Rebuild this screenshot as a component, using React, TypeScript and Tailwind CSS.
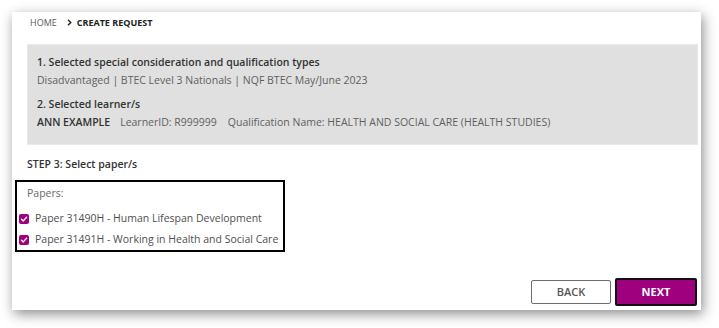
import React from "react";

function Check() {
  return (
    <span className="flex h-[10px] w-[10px] shrink-0 items-center justify-center rounded-[2px] bg-[#9e007e]">
      <svg width="8" height="8" viewBox="0 0 8 8" fill="none">
        <path d="M1.5 4.2 L3.3 5.9 L6.6 2.3" stroke="#fff" strokeWidth="1.4" strokeLinecap="round" strokeLinejoin="round" />
      </svg>
    </span>
  );
}

export default function App() {
  return (
    <div className="h-[328px] w-[719px] bg-white pl-3 pt-3 font-['Open_Sans',sans-serif] text-[10.5px]">
      <div className="flex h-[298px] w-[689px] flex-col bg-white shadow-[2px_4px_12px_rgba(0,0,0,0.45)]">
        <div className="flex h-[32px] items-start gap-[10px] pl-[18px] pt-[4px] text-[9px] leading-[13px]">
          <span className="text-[#5a5a5a]">HOME</span>
          <span className="flex items-center gap-[5px] font-bold text-[#222]">
            <svg width="5" height="7" viewBox="0 0 5 7" fill="none">
              <path d="M1 0.8 L3.8 3.5 L1 6.2" stroke="#222" strokeWidth="1.4" />
            </svg>
            CREATE REQUEST
          </span>
        </div>
        <div className="ml-[15px] mr-[3px] h-[101px] whitespace-nowrap border border-[#e8e9e8] bg-[#dfe0df] pl-[9px] pt-[8px] leading-[18px]">
          <div className="font-semibold text-[#333]">1. Selected special consideration and qualification types</div>
          <div className="text-[#5f5f5f]">Disadvantaged | BTEC Level 3 Nationals | NQF BTEC May/June 2023</div>
          <div className="mt-[6px] font-semibold text-[#333]">2. Selected learner/s</div>
          <div className="flex text-[#5f5f5f]">
            <span className="font-semibold text-[#333]">ANN EXAMPLE</span>
            <span className="ml-[10px]">LearnerID: R999999</span>
            <span className="ml-[11px]">Qualification Name: HEALTH AND SOCIAL CARE (HEALTH STUDIES)</span>
          </div>
        </div>
        <div className="mt-[11px] pl-[15px] font-semibold leading-[17px] text-[#333]">STEP 3: Select paper/s</div>
        <div className="ml-[3px] mt-[7px] w-[270px] whitespace-nowrap border-2 border-black pl-[2px] pt-[3px] leading-[17px]">
          <div className="pl-[8px] text-[#6a6a6a]">Papers:</div>
          <div className="mt-[6px] flex h-[21px] items-center gap-[6px] text-[#4f4f4f]">
            <Check />
            <span>Paper 31490H - Human Lifespan Development</span>
          </div>
          <div className="flex h-[21px] items-center gap-[6px] text-[#4f4f4f]">
            <Check />
            <span>Paper 31491H - Working in Health and Social Care</span>
          </div>
        </div>
        <div className="mt-auto flex items-center justify-end gap-[4px] pb-[4px] pr-[4px] text-[11px]">
          <button className="flex h-[24px] w-[80px] items-center justify-center rounded-[2px] border-[1.5px] border-[#6e6e6e] bg-white font-semibold text-[#555]">
            BACK
          </button>
          <button className="flex h-[28px] w-[82px] items-center justify-center rounded-[2px] border-2 border-[#111] bg-[#9e007e] font-bold text-white">
            NEXT
          </button>
        </div>
      </div>
    </div>
  );
}
